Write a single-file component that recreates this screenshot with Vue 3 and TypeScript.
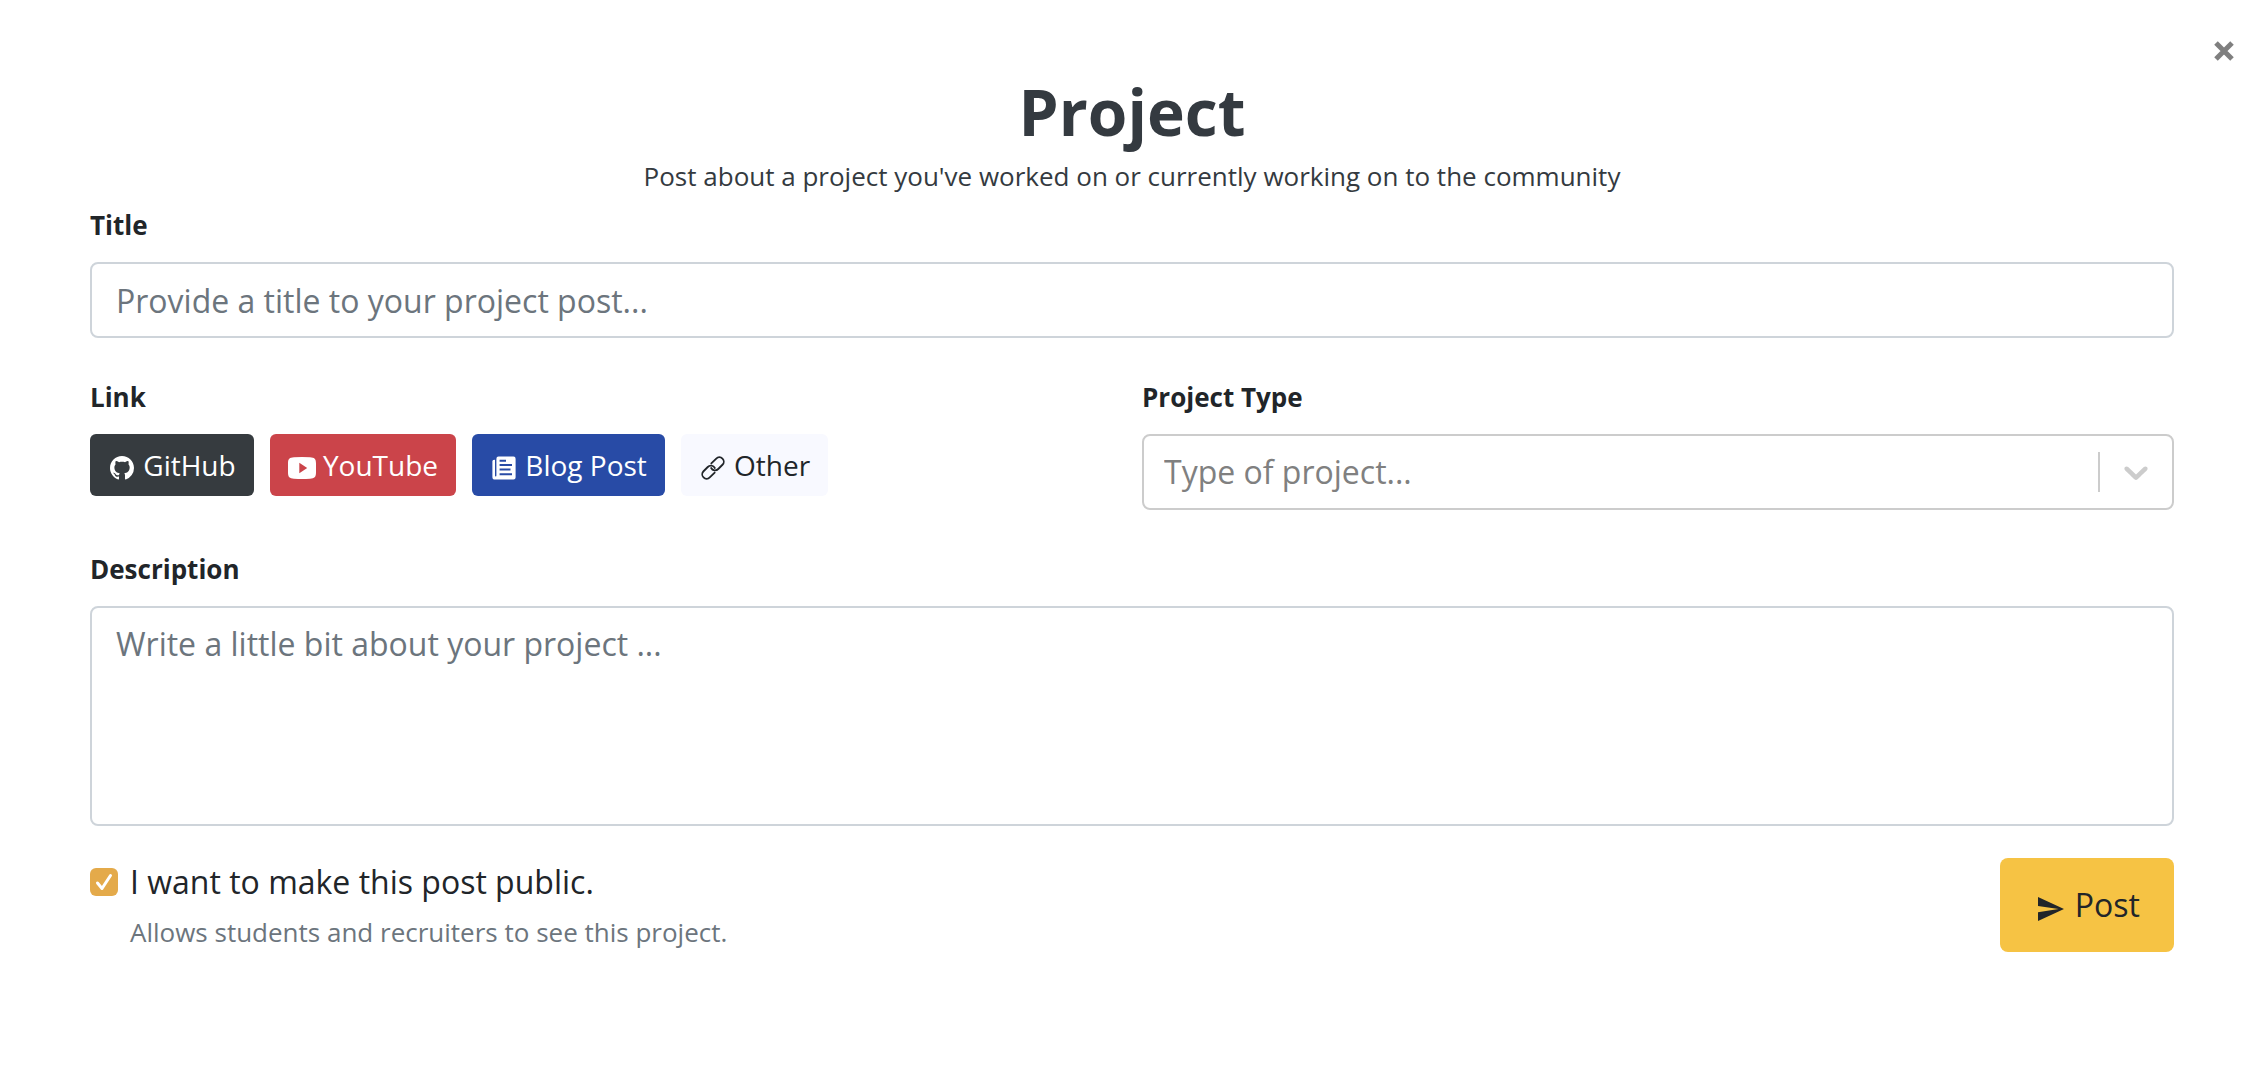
<script setup lang="ts">
import { ref } from 'vue'

const title = ref('')
const projectType = ref('')
const description = ref('')
const isPublic = ref(true)
</script>

<template>
  <main class="modal">
    <button class="close" type="button" aria-label="Close">
      <svg viewBox="0 0 22 22" aria-hidden="true">
        <path d="M3 3 19 19M19 3 3 19" />
      </svg>
    </button>

    <header class="heading">
      <h1>Project</h1>
      <p>Post about a project you've worked on or currently working on to the community</p>
    </header>

    <form @submit.prevent>
      <div class="field">
        <label class="label" for="title">Title</label>
        <input id="title" v-model="title" class="control" type="text" placeholder="Provide a title to your project post..." />
      </div>

      <div class="row">
        <div class="field" role="group" aria-labelledby="link-label">
          <span id="link-label" class="label">Link</span>
          <div class="links">
            <button class="link-btn github" type="button">
              <svg viewBox="0 0 28 28" aria-hidden="true">
                <path transform="translate(2 2) scale(1.5)" d="M8 0C3.58 0 0 3.58 0 8c0 3.54 2.29 6.53 5.47 7.59.4.07.55-.17.55-.38 0-.19-.01-.82-.01-1.49-2.01.37-2.53-.49-2.69-.94-.09-.23-.48-.94-.82-1.13-.28-.15-.68-.52-.01-.53.63-.01 1.08.58 1.23.82.72 1.21 1.87.87 2.33.66.07-.52.28-.87.51-1.07-1.78-.2-3.64-.89-3.64-3.95 0-.87.31-1.59.82-2.15-.08-.2-.36-1.02.08-2.12 0 0 .67-.21 2.2.82.64-.18 1.32-.27 2-.27s1.36.09 2 .27c1.53-1.04 2.2-.82 2.2-.82.44 1.1.16 1.92.08 2.12.51.56.82 1.27.82 2.15 0 3.07-1.87 3.75-3.65 3.95.29.25.54.73.54 1.48 0 1.07-.01 1.93-.01 2.2 0 .21.15.46.55.38A8.01 8.01 0 0 0 16 8c0-4.42-3.58-8-8-8z" />
              </svg>
              GitHub
            </button>
            <button class="link-btn youtube" type="button">
              <svg viewBox="0 0 28 28" aria-hidden="true">
                <path fill-rule="evenodd" d="M6 3.300Q14 2.900 22 3.300C26.500 3.500 28 5 28 9.500V18.500C28 23 26.500 24.500 22 24.700Q14 25.100 6 24.700C1.500 24.500 0 23 0 18.500V9.500C0 5 1.500 3.500 6 3.300ZM11.300 8.800V19.200L19.200 14Z" />
              </svg>
              YouTube
            </button>
            <button class="link-btn blog" type="button">
              <svg viewBox="0 0 28 28" aria-hidden="true">
                <path d="M8.500 2.600H23.500Q25.600 2.600 25.600 4.700V23.500Q25.600 25.600 23.500 25.600H5Q2.400 25.600 2.400 23V7Q2.400 5.700 5 5.700V21.500Q5 22.600 5.700 22.600Q6.400 22.600 6.400 21.500V4.700Q6.400 2.600 8.500 2.600Z" />
                <path class="rule" d="M9.600 6.700H16M9.600 11H22M9.600 15.500H20.500M9.600 20.300H22" />
              </svg>
              Blog Post
            </button>
            <button class="link-btn other" type="button">
              <svg viewBox="0 0 28 28" aria-hidden="true">
                <g class="chain" transform="rotate(-45 14 14)">
                  <path d="M12 18.400H5a4.400 4.400 0 0 1 0-8.800H11a4.400 4.400 0 0 1 4.300 5.700" />
                  <path d="M16 9.600h7a4.400 4.400 0 0 1 0 8.800H17a4.400 4.400 0 0 1-4.300-5.700" />
                </g>
              </svg>
              Other
            </button>
          </div>
        </div>

        <div class="field">
          <label class="label" for="type">Project Type</label>
          <div class="select">
            <select id="type" v-model="projectType" class="control">
              <option value="" disabled>Type of project...</option>
            </select>
            <span class="indicator">
              <svg viewBox="0 0 20 20" aria-hidden="true">
                <path d="M4.516 7.548c0.436-0.446 1.043-0.481 1.576 0l3.908 3.747 3.908-3.747c0.533-0.481 1.141-0.446 1.574 0 0.436 0.445 0.408 1.197 0 1.615-0.406 0.418-4.695 4.502-4.695 4.502-0.217 0.223-0.502 0.335-0.787 0.335s-0.57-0.112-0.789-0.335c0 0-4.287-4.084-4.695-4.502s-0.436-1.17 0-1.615z" />
              </svg>
            </span>
          </div>
        </div>
      </div>

      <div class="field">
        <label class="label" for="description">Description</label>
        <textarea id="description" v-model="description" class="control" placeholder="Write a little bit about your project ..."></textarea>
      </div>

      <div class="footer">
        <div class="public">
          <span class="check">
            <input id="public" v-model="isPublic" type="checkbox" aria-describedby="public-help" />
            <svg v-if="isPublic" viewBox="0 0 28 28" aria-hidden="true">
              <path d="M7.500 15 12 20.500 20.500 7.500" />
            </svg>
          </span>
          <div>
            <label class="public-label" for="public">I want to make this post public.</label>
            <p id="public-help" class="help">Allows students and recruiters to see this project.</p>
          </div>
        </div>
        <button class="post" type="submit">
          <svg viewBox="0 0 512 512" aria-hidden="true">
            <path d="M48 448l416-192L48 64v142l330 50L48 306z" />
          </svg>
          Post
        </button>
      </div>
    </form>
  </main>
</template>

<style>
body {
  margin: 0;
  background: #fff;
}
</style>

<style scoped>
.modal {
  position: relative;
  padding: 73px 90px;
  font-family: "Open Sans", "Noto Sans", sans-serif;
  color: #212529;
}

.modal * {
  box-sizing: border-box;
}

button,
input,
select,
textarea {
  margin: 0;
  font: inherit;
  color: inherit;
}

button {
  border: 0;
  cursor: pointer;
  white-space: nowrap;
}

.close {
  position: absolute;
  top: 40px;
  right: 29px;
  width: 22px;
  height: 22px;
  padding: 0;
  background: none;
}

.close svg {
  display: block;
  width: 22px;
  height: 22px;
  fill: none;
  stroke: #7f7f7f;
  stroke-width: 5;
}

.heading {
  text-align: center;
  color: #343a40;
}

.heading h1 {
  margin: 0 0 6px;
  font-size: 64px;
  font-weight: 700;
  line-height: 77px;
}

.heading p {
  margin: 0 0 8px;
  font-size: 26px;
  line-height: 40px;
}

form {
  display: flex;
  flex-direction: column;
  gap: 38px;
}

.field {
  display: flex;
  flex-direction: column;
  gap: 16px;
}

.label {
  align-self: flex-start;
  font-size: 26px;
  font-weight: 700;
  line-height: 42px;
}

.control {
  display: block;
  width: 100%;
  padding: 12px 24px;
  border: 2px solid #ced4da;
  border-radius: 8px;
  background: #fff;
  font-size: 32px;
  line-height: 48px;
}

.control::placeholder {
  color: #6c757d;
  opacity: 1;
}

input.control {
  height: 76px;
}

textarea.control {
  height: 220px;
  resize: none;
}

.row {
  display: grid;
  grid-template-columns: 1fr 1fr;
  gap: 20px;
}

.links {
  display: flex;
  gap: 16px;
}

.link-btn {
  height: 62px;
  padding: 0 18px;
  border-radius: 6px;
  font-size: 28px;
  line-height: 42px;
  color: #fff;
}

.link-btn svg {
  width: 28px;
  height: 28px;
  vertical-align: -6px;
  fill: currentColor;
}

.github {
  background: #363b3f;
}

.youtube {
  background: #cb444a;
}

.blog {
  background: #284ba6;
}

.other {
  background: #f8f9ff;
  color: #212529;
}

.link-btn .rule {
  fill: none;
  stroke: #284ba6;
  stroke-width: 2;
}

.link-btn .chain {
  fill: none;
  stroke: #212529;
  stroke-width: 1.8;
  stroke-linecap: round;
}

.select {
  position: relative;
}

.select .control {
  height: 76px;
  padding: 0 96px 0 20px;
  border-color: #ccc;
  appearance: none;
  color: #808080;
}

.indicator {
  position: absolute;
  top: 18px;
  right: 18px;
  display: flex;
  padding-left: 16px;
  border-left: 2px solid #ccc;
  pointer-events: none;
}

.indicator svg {
  width: 40px;
  height: 40px;
  fill: #ccc;
}

.footer {
  display: flex;
  justify-content: space-between;
  align-items: flex-start;
  margin-top: -6px;
}

.public {
  display: flex;
  gap: 12px;
}

.check {
  position: relative;
  width: 28px;
  height: 28px;
  margin-top: 10px;
}

.check input {
  display: block;
  width: 28px;
  height: 28px;
  border-radius: 6px;
  background: #e4aa4a;
  appearance: none;
}

.check svg {
  position: absolute;
  inset: 0;
  fill: none;
  stroke: #fff;
  stroke-width: 3;
  stroke-linecap: round;
  stroke-linejoin: round;
  pointer-events: none;
}

.public-label {
  display: block;
  font-size: 32px;
  line-height: 48px;
}

.help {
  margin: 6px 0 0;
  font-size: 26px;
  line-height: 40px;
  color: #6c757d;
}

.post {
  height: 94px;
  padding: 0 34px 0 35px;
  border-radius: 8px;
  background: #f6c344;
  font-size: 32px;
  line-height: 48px;
}

.post svg {
  width: 32px;
  height: 32px;
  vertical-align: -8px;
  fill: currentColor;
}
</style>
